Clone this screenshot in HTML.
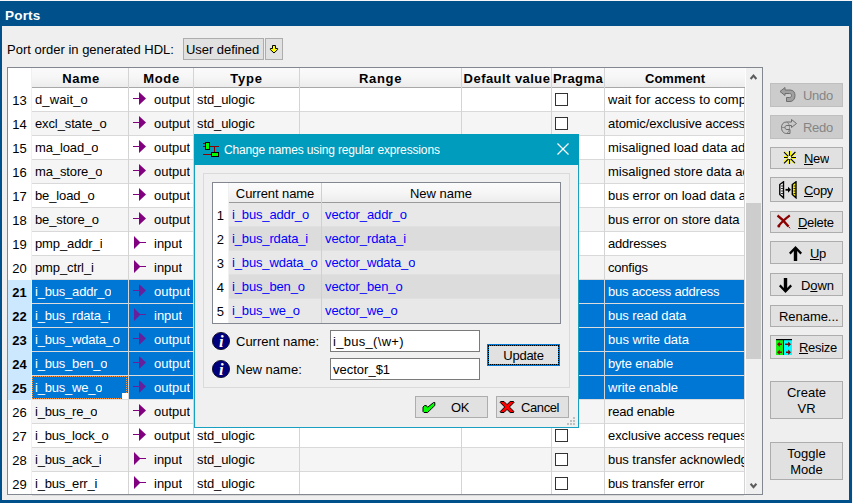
<!DOCTYPE html><html><head><meta charset="utf-8"><title>Ports</title><style>
*{box-sizing:border-box;margin:0;padding:0}
html,body{width:853px;height:503px;overflow:hidden}
body{background:#00518b;font-family:"Liberation Sans",sans-serif;font-size:13px;color:#000;position:relative}
.a{position:absolute}
.t{position:absolute;white-space:nowrap;line-height:24px;height:24px;overflow:hidden}
.btn{position:absolute;background:#e1e1e1;border:1px solid #adadad}
.btn.dis{background:#cccccc;border-color:#bfbfbf;color:#838383}
.btn .t{line-height:normal;height:auto;overflow:visible}
u{text-decoration:underline;text-underline-offset:1px}
.hl{position:absolute;height:1px;background:#d9d9d9}
.vl{position:absolute;width:1px;background:#d4d4d4}
.alt{position:absolute;background:#f5f5f5}
.sel{position:absolute;background:#0077d5}
.cb{position:absolute;width:13px;height:13px;border:1px solid #333;background:#fff}
.hd{position:absolute;background:linear-gradient(#fbfbfb,#f6f6f6 50%,#ececec);}
.hb{font-weight:bold;text-align:center}
</style></head><body>
<div class="a" style="left:0;top:0;width:853px;height:1px;background:#f4f6f8"></div>
<div class="a" style="left:852px;top:0;width:1px;height:503px;background:#f4f6f8"></div>
<div class="t" style="left:5px;top:4px;font-weight:bold;color:#fff;font-size:13.5px;letter-spacing:0.2px">Ports</div>
<div class="a" style="left:2px;top:26px;width:847px;height:474px;background:#efefef"></div>
<div class="t" style="left:7px;top:38px">Port order in generated HDL:</div>
<div class="btn" style="left:183px;top:38px;width:81px;height:22px"></div>
<div class="t" style="left:186px;top:38px;letter-spacing:-0.05px">User defined</div>
<div class="btn" style="left:265px;top:38px;width:18px;height:22px"></div>
<svg class="a" style="left:268px;top:43px" width="12" height="12" viewBox="268 43 12 12"><path d="M272.5 45.5H275.5V48.5H277.6V49.6L274 53L270.4 49.6V48.5H272.5Z" fill="#ffff00" stroke="#000" stroke-width="1" stroke-linejoin="miter"/></svg>
<div class="a" style="left:7px;top:67px;width:756px;height:428px;background:#fff;border:1px solid #828790"></div>
<div class="hd" style="left:32px;top:68px;width:713px;height:19px"></div>
<div class="a" style="left:32px;top:87px;width:713px;height:1px;background:#a8a8a8"></div>
<div class="t hb" style="left:32px;top:67px;width:96px;letter-spacing:0.5px;padding-left:2px">Name</div>
<div class="t hb" style="left:129px;top:67px;width:64px;letter-spacing:0.7px;padding-left:1px">Mode</div>
<div class="t hb" style="left:194px;top:67px;width:105px;letter-spacing:0.8px">Type</div>
<div class="t hb" style="left:300px;top:67px;width:161px;letter-spacing:0.7px">Range</div>
<div class="t hb" style="left:462px;top:67px;width:89px;letter-spacing:0.45px;padding-left:1px">Default value</div>
<div class="t hb" style="left:552px;top:67px;width:52px;letter-spacing:0.4px">Pragma</div>
<div class="t hb" style="left:605px;top:67px;width:140px;letter-spacing:0px">Comment</div>
<div class="hl" style="left:32px;top:111px;width:712px"></div>
<div class="t" style="left:8px;top:89px;width:23px;text-align:center;">13</div>
<div class="t" style="left:35px;top:88px;color:#000;letter-spacing:0.1px">d_wait_o</div>
<svg class="a" style="left:133px;top:92px" width="14" height="14" viewBox="0 0 14 14"><path d="M0 6h7v1h-7z M6 0l7 6.5l-7 6.5z" fill="#800080"/></svg>
<div class="t" style="left:154px;top:88px;color:#000">output</div>
<div class="t" style="left:197px;top:88px;color:#000;width:101px;letter-spacing:-0.1px">std_ulogic</div>
<div class="cb" style="left:555px;top:93px"></div>
<div class="t" style="left:608px;top:88px;color:#000;width:136px;letter-spacing:0.1px">wait for access to complete</div>
<div class="alt" style="left:32px;top:112px;width:712px;height:23px"></div>
<div class="hl" style="left:32px;top:135px;width:712px"></div>
<div class="t" style="left:8px;top:113px;width:23px;text-align:center;">14</div>
<div class="t" style="left:35px;top:112px;color:#000;letter-spacing:-0.12px">excl_state_o</div>
<svg class="a" style="left:133px;top:116px" width="14" height="14" viewBox="0 0 14 14"><path d="M0 6h7v1h-7z M6 0l7 6.5l-7 6.5z" fill="#800080"/></svg>
<div class="t" style="left:154px;top:112px;color:#000">output</div>
<div class="t" style="left:197px;top:112px;color:#000;width:101px;letter-spacing:-0.1px">std_ulogic</div>
<div class="cb" style="left:555px;top:117px"></div>
<div class="t" style="left:608px;top:112px;color:#000;width:136px;letter-spacing:-0.1px">atomic/exclusive access</div>
<div class="hl" style="left:32px;top:159px;width:712px"></div>
<div class="t" style="left:8px;top:137px;width:23px;text-align:center;">15</div>
<div class="t" style="left:35px;top:136px;color:#000;letter-spacing:-0.12px">ma_load_o</div>
<svg class="a" style="left:133px;top:140px" width="14" height="14" viewBox="0 0 14 14"><path d="M0 6h7v1h-7z M6 0l7 6.5l-7 6.5z" fill="#800080"/></svg>
<div class="t" style="left:154px;top:136px;color:#000">output</div>
<div class="t" style="left:197px;top:136px;color:#000;width:101px;letter-spacing:-0.1px">std_ulogic</div>
<div class="cb" style="left:555px;top:141px"></div>
<div class="t" style="left:608px;top:136px;color:#000;width:136px;letter-spacing:0px">misaligned load data address</div>
<div class="alt" style="left:32px;top:160px;width:712px;height:23px"></div>
<div class="hl" style="left:32px;top:183px;width:712px"></div>
<div class="t" style="left:8px;top:161px;width:23px;text-align:center;">16</div>
<div class="t" style="left:35px;top:160px;color:#000;letter-spacing:-0.12px">ma_store_o</div>
<svg class="a" style="left:133px;top:164px" width="14" height="14" viewBox="0 0 14 14"><path d="M0 6h7v1h-7z M6 0l7 6.5l-7 6.5z" fill="#800080"/></svg>
<div class="t" style="left:154px;top:160px;color:#000">output</div>
<div class="t" style="left:197px;top:160px;color:#000;width:101px;letter-spacing:-0.1px">std_ulogic</div>
<div class="cb" style="left:555px;top:165px"></div>
<div class="t" style="left:608px;top:160px;color:#000;width:136px;letter-spacing:0px">misaligned store data address</div>
<div class="hl" style="left:32px;top:207px;width:712px"></div>
<div class="t" style="left:8px;top:185px;width:23px;text-align:center;">17</div>
<div class="t" style="left:35px;top:184px;color:#000;letter-spacing:-0.12px">be_load_o</div>
<svg class="a" style="left:133px;top:188px" width="14" height="14" viewBox="0 0 14 14"><path d="M0 6h7v1h-7z M6 0l7 6.5l-7 6.5z" fill="#800080"/></svg>
<div class="t" style="left:154px;top:184px;color:#000">output</div>
<div class="t" style="left:197px;top:184px;color:#000;width:101px;letter-spacing:-0.1px">std_ulogic</div>
<div class="cb" style="left:555px;top:189px"></div>
<div class="t" style="left:608px;top:184px;color:#000;width:136px;letter-spacing:0px">bus error on load data access</div>
<div class="alt" style="left:32px;top:208px;width:712px;height:23px"></div>
<div class="hl" style="left:32px;top:231px;width:712px"></div>
<div class="t" style="left:8px;top:209px;width:23px;text-align:center;">18</div>
<div class="t" style="left:35px;top:208px;color:#000;letter-spacing:-0.12px">be_store_o</div>
<svg class="a" style="left:133px;top:212px" width="14" height="14" viewBox="0 0 14 14"><path d="M0 6h7v1h-7z M6 0l7 6.5l-7 6.5z" fill="#800080"/></svg>
<div class="t" style="left:154px;top:208px;color:#000">output</div>
<div class="t" style="left:197px;top:208px;color:#000;width:101px;letter-spacing:-0.1px">std_ulogic</div>
<div class="cb" style="left:555px;top:213px"></div>
<div class="t" style="left:608px;top:208px;color:#000;width:136px;letter-spacing:0px">bus error on store data</div>
<div class="hl" style="left:32px;top:255px;width:712px"></div>
<div class="t" style="left:8px;top:233px;width:23px;text-align:center;">19</div>
<div class="t" style="left:35px;top:232px;color:#000;letter-spacing:-0.12px">pmp_addr_i</div>
<svg class="a" style="left:133px;top:236px" width="14" height="14" viewBox="0 0 14 14"><path d="M6 6h7v1h-7z M1 0l6.5 6.5l-6.5 6.5z" fill="#800080"/></svg>
<div class="t" style="left:154px;top:232px;color:#000">input</div>
<div class="t" style="left:197px;top:232px;color:#000;width:101px;letter-spacing:-0.1px">pmp_addr_if_t</div>
<div class="cb" style="left:555px;top:237px"></div>
<div class="t" style="left:608px;top:232px;color:#000;width:136px;letter-spacing:-0.2px">addresses</div>
<div class="alt" style="left:32px;top:256px;width:712px;height:23px"></div>
<div class="hl" style="left:32px;top:279px;width:712px"></div>
<div class="t" style="left:8px;top:257px;width:23px;text-align:center;">20</div>
<div class="t" style="left:35px;top:256px;color:#000;letter-spacing:-0.12px">pmp_ctrl_i</div>
<svg class="a" style="left:133px;top:260px" width="14" height="14" viewBox="0 0 14 14"><path d="M6 6h7v1h-7z M1 0l6.5 6.5l-6.5 6.5z" fill="#800080"/></svg>
<div class="t" style="left:154px;top:256px;color:#000">input</div>
<div class="t" style="left:197px;top:256px;color:#000;width:101px;letter-spacing:-0.1px">pmp_ctrl_if_t</div>
<div class="cb" style="left:555px;top:261px"></div>
<div class="t" style="left:608px;top:256px;color:#000;width:136px;letter-spacing:-0.2px">configs</div>
<div class="a" style="left:8px;top:280px;width:23px;height:24px;background:#cce8ff"></div>
<div class="sel" style="left:32px;top:280px;width:712px;height:23px"></div>
<div class="hl" style="left:32px;top:303px;width:712px;background:#dcdcdc"></div>
<div class="t" style="left:8px;top:281px;width:23px;text-align:center;font-weight:bold;">21</div>
<div class="t" style="left:35px;top:280px;color:#fff;letter-spacing:-0.2px">i_bus_addr_o</div>
<svg class="a" style="left:133px;top:284px" width="14" height="14" viewBox="0 0 14 14"><path d="M0 6h7v1h-7z M6 0l7 6.5l-7 6.5z" fill="#66209c"/></svg>
<div class="t" style="left:154px;top:280px;color:#fff">output</div>
<div class="t" style="left:197px;top:280px;color:#fff;width:101px;letter-spacing:-0.1px">std_ulogic_vector</div>
<div class="t" style="left:608px;top:280px;color:#fff;width:136px;letter-spacing:-0.2px">bus access address</div>
<div class="a" style="left:8px;top:304px;width:23px;height:24px;background:#cce8ff"></div>
<div class="sel" style="left:32px;top:304px;width:712px;height:23px"></div>
<div class="hl" style="left:32px;top:327px;width:712px;background:#dcdcdc"></div>
<div class="t" style="left:8px;top:305px;width:23px;text-align:center;font-weight:bold;">22</div>
<div class="t" style="left:35px;top:304px;color:#fff;letter-spacing:-0.2px">i_bus_rdata_i</div>
<svg class="a" style="left:133px;top:308px" width="14" height="14" viewBox="0 0 14 14"><path d="M6 6h7v1h-7z M1 0l6.5 6.5l-6.5 6.5z" fill="#66209c"/></svg>
<div class="t" style="left:154px;top:304px;color:#fff">input</div>
<div class="t" style="left:197px;top:304px;color:#fff;width:101px;letter-spacing:-0.1px">std_ulogic_vector</div>
<div class="t" style="left:608px;top:304px;color:#fff;width:136px;letter-spacing:-0.1px">bus read data</div>
<div class="a" style="left:8px;top:328px;width:23px;height:24px;background:#cce8ff"></div>
<div class="sel" style="left:32px;top:328px;width:712px;height:23px"></div>
<div class="hl" style="left:32px;top:351px;width:712px;background:#dcdcdc"></div>
<div class="t" style="left:8px;top:329px;width:23px;text-align:center;font-weight:bold;">23</div>
<div class="t" style="left:35px;top:328px;color:#fff;letter-spacing:-0.2px">i_bus_wdata_o</div>
<svg class="a" style="left:133px;top:332px" width="14" height="14" viewBox="0 0 14 14"><path d="M0 6h7v1h-7z M6 0l7 6.5l-7 6.5z" fill="#66209c"/></svg>
<div class="t" style="left:154px;top:328px;color:#fff">output</div>
<div class="t" style="left:197px;top:328px;color:#fff;width:101px;letter-spacing:-0.1px">std_ulogic_vector</div>
<div class="t" style="left:608px;top:328px;color:#fff;width:136px;letter-spacing:0px">bus write data</div>
<div class="a" style="left:8px;top:352px;width:23px;height:24px;background:#cce8ff"></div>
<div class="sel" style="left:32px;top:352px;width:712px;height:23px"></div>
<div class="hl" style="left:32px;top:375px;width:712px;background:#dcdcdc"></div>
<div class="t" style="left:8px;top:353px;width:23px;text-align:center;font-weight:bold;">24</div>
<div class="t" style="left:35px;top:352px;color:#fff;letter-spacing:-0.2px">i_bus_ben_o</div>
<svg class="a" style="left:133px;top:356px" width="14" height="14" viewBox="0 0 14 14"><path d="M0 6h7v1h-7z M6 0l7 6.5l-7 6.5z" fill="#66209c"/></svg>
<div class="t" style="left:154px;top:352px;color:#fff">output</div>
<div class="t" style="left:197px;top:352px;color:#fff;width:101px;letter-spacing:-0.1px">std_ulogic_vector</div>
<div class="t" style="left:608px;top:352px;color:#fff;width:136px;letter-spacing:-0.2px">byte enable</div>
<div class="a" style="left:8px;top:376px;width:23px;height:24px;background:#cce8ff"></div>
<div class="sel" style="left:32px;top:376px;width:712px;height:23px"></div>
<div class="hl" style="left:32px;top:399px;width:712px;background:#dcdcdc"></div>
<div class="t" style="left:8px;top:377px;width:23px;text-align:center;font-weight:bold;">25</div>
<div class="t" style="left:35px;top:376px;color:#fff;letter-spacing:-0.2px">i_bus_we_o</div>
<svg class="a" style="left:133px;top:380px" width="14" height="14" viewBox="0 0 14 14"><path d="M0 6h7v1h-7z M6 0l7 6.5l-7 6.5z" fill="#66209c"/></svg>
<div class="t" style="left:154px;top:376px;color:#fff">output</div>
<div class="t" style="left:197px;top:376px;color:#fff;width:101px;letter-spacing:-0.1px">std_ulogic</div>
<div class="t" style="left:608px;top:376px;color:#fff;width:136px;letter-spacing:0px">write enable</div>
<div class="alt" style="left:32px;top:400px;width:712px;height:23px"></div>
<div class="hl" style="left:32px;top:423px;width:712px"></div>
<div class="t" style="left:8px;top:401px;width:23px;text-align:center;">26</div>
<div class="t" style="left:35px;top:400px;color:#000;letter-spacing:-0.2px">i_bus_re_o</div>
<svg class="a" style="left:133px;top:404px" width="14" height="14" viewBox="0 0 14 14"><path d="M0 6h7v1h-7z M6 0l7 6.5l-7 6.5z" fill="#800080"/></svg>
<div class="t" style="left:154px;top:400px;color:#000">output</div>
<div class="t" style="left:197px;top:400px;color:#000;width:101px;letter-spacing:-0.1px">std_ulogic</div>
<div class="cb" style="left:555px;top:405px"></div>
<div class="t" style="left:608px;top:400px;color:#000;width:136px;letter-spacing:-0.2px">read enable</div>
<div class="hl" style="left:32px;top:447px;width:712px"></div>
<div class="t" style="left:8px;top:425px;width:23px;text-align:center;">27</div>
<div class="t" style="left:35px;top:424px;color:#000;letter-spacing:-0.2px">i_bus_lock_o</div>
<svg class="a" style="left:133px;top:428px" width="14" height="14" viewBox="0 0 14 14"><path d="M0 6h7v1h-7z M6 0l7 6.5l-7 6.5z" fill="#800080"/></svg>
<div class="t" style="left:154px;top:424px;color:#000">output</div>
<div class="t" style="left:197px;top:424px;color:#000;width:101px;letter-spacing:-0.1px">std_ulogic</div>
<div class="cb" style="left:555px;top:429px"></div>
<div class="t" style="left:608px;top:424px;color:#000;width:136px;letter-spacing:-0.1px">exclusive access request</div>
<div class="alt" style="left:32px;top:448px;width:712px;height:23px"></div>
<div class="hl" style="left:32px;top:471px;width:712px"></div>
<div class="t" style="left:8px;top:449px;width:23px;text-align:center;">28</div>
<div class="t" style="left:35px;top:448px;color:#000;letter-spacing:-0.2px">i_bus_ack_i</div>
<svg class="a" style="left:133px;top:452px" width="14" height="14" viewBox="0 0 14 14"><path d="M6 6h7v1h-7z M1 0l6.5 6.5l-6.5 6.5z" fill="#800080"/></svg>
<div class="t" style="left:154px;top:448px;color:#000">input</div>
<div class="t" style="left:197px;top:448px;color:#000;width:101px;letter-spacing:-0.1px">std_ulogic</div>
<div class="cb" style="left:555px;top:453px"></div>
<div class="t" style="left:608px;top:448px;color:#000;width:136px;letter-spacing:-0.05px">bus transfer acknowledge</div>
<div class="hl" style="left:32px;top:495px;width:712px"></div>
<div class="t" style="left:8px;top:473px;width:23px;text-align:center;">29</div>
<div class="t" style="left:35px;top:472px;color:#000;letter-spacing:-0.2px">i_bus_err_i</div>
<svg class="a" style="left:133px;top:476px" width="14" height="14" viewBox="0 0 14 14"><path d="M6 6h7v1h-7z M1 0l6.5 6.5l-6.5 6.5z" fill="#800080"/></svg>
<div class="t" style="left:154px;top:472px;color:#000">input</div>
<div class="t" style="left:197px;top:472px;color:#000;width:101px;letter-spacing:-0.1px">std_ulogic</div>
<div class="cb" style="left:555px;top:477px"></div>
<div class="t" style="left:608px;top:472px;color:#000;width:136px;letter-spacing:-0.2px">bus transfer error</div>
<div class="vl" style="left:31px;top:68px;height:426px;background:#f0f0f0"></div>
<div class="vl" style="left:128px;top:68px;height:426px"></div>
<div class="vl" style="left:193px;top:68px;height:426px"></div>
<div class="vl" style="left:299px;top:68px;height:426px"></div>
<div class="vl" style="left:461px;top:68px;height:426px"></div>
<div class="vl" style="left:551px;top:68px;height:426px"></div>
<div class="vl" style="left:604px;top:68px;height:426px"></div>
<div class="a" style="left:32px;top:376px;width:95px;height:23px;border:1px dotted #ff9436"></div>
<div class="a" style="left:122px;top:393px;width:6px;height:6px;background:#fff"></div>
<div class="a" style="left:746px;top:68px;width:16px;height:426px;background:#f0f0f0"></div>
<div class="a" style="left:744px;top:88px;width:1px;height:406px;background:#d4d4d4"></div>
<div class="a" style="left:745px;top:68px;width:1px;height:426px;background:#fdfdfd"></div>
<div class="a" style="left:746px;top:203px;width:15px;height:156px;background:#cdcdcd"></div>
<svg class="a" style="left:748px;top:72px" width="12" height="10" viewBox="748 72 12 10"><path d="M750.6 79L753.5 75.6L756.4 79" fill="none" stroke="#5c5c5c" stroke-width="2.1"/></svg>
<svg class="a" style="left:748px;top:481px" width="12" height="10" viewBox="748 481 12 10"><path d="M750.6 483.8L753.5 487.2L756.4 483.8" fill="none" stroke="#5c5c5c" stroke-width="2.1"/></svg>
<div class="btn dis" style="left:770px;top:83px;width:73px;height:24px"></div>
<div class="btn dis" style="left:770px;top:115px;width:73px;height:24px"></div>
<div class="btn" style="left:770px;top:147px;width:73px;height:22px"></div>
<div class="btn" style="left:770px;top:177px;width:73px;height:25px"></div>
<div class="btn" style="left:770px;top:211px;width:73px;height:22px"></div>
<div class="btn" style="left:770px;top:241px;width:73px;height:23px"></div>
<div class="btn" style="left:770px;top:273px;width:73px;height:23px"></div>
<div class="btn" style="left:770px;top:305px;width:73px;height:22px"></div>
<div class="btn" style="left:770px;top:335px;width:73px;height:24px"></div>
<div class="btn" style="left:770px;top:381px;width:73px;height:38px"></div>
<div class="btn" style="left:770px;top:442px;width:73px;height:38px"></div>
<div class="t" style="left:803px;top:84px;color:#858585;letter-spacing:-0.3px">Undo</div>
<div class="t" style="left:803px;top:116px;color:#858585;letter-spacing:-0.3px">Redo</div>
<div class="t" style="left:804px;top:147px;color:#000;letter-spacing:-0.3px"><u>N</u>ew</div>
<div class="t" style="left:804px;top:179px;color:#000;letter-spacing:-0.35px"><u>C</u>opy</div>
<div class="t" style="left:798px;top:211px;color:#000;letter-spacing:-0.3px"><u>D</u>elete</div>
<div class="t" style="left:810px;top:242px;color:#000;letter-spacing:-0.3px"><u>U</u>p</div>
<div class="t" style="left:801px;top:274px;color:#000;letter-spacing:-0.1px">D<u>o</u>wn</div>
<div class="t" style="left:779px;top:305px;color:#000;letter-spacing:-0.05px">Rename...</div>
<div class="t" style="left:799px;top:336px;color:#000;letter-spacing:-0.3px"><u>R</u>esize</div>
<div class="t" style="left:770px;top:385px;width:73px;text-align:center;line-height:16px;height:34px;white-space:normal">Create<br>VR</div>
<div class="t" style="left:770px;top:446px;width:73px;text-align:center;line-height:16px;height:34px;white-space:normal">Toggle<br>Mode</div>
<svg class="a" style="left:779px;top:86px" width="18" height="17" viewBox="0 0 18 17"><path d="M1 5.5L6 1.5V4H11C14.5 4 16 6.5 16 9.5C16 13 14 15.5 11 15.5H7.5V11.5H10.5C12 11.5 12.5 10.5 12.5 9.5C12.5 8.3 12 7.5 10.5 7.5H6V9.5Z" fill="#a0a0a0" stroke="#6e6e6e" stroke-width="1" stroke-linejoin="round"/></svg>
<svg class="a" style="left:780px;top:118px" width="18" height="17" viewBox="0 0 18 17"><g transform="translate(17.5,0) scale(-1,1)"><path d="M1 5.5L6 1.5V4H11C14.5 4 16 6.5 16 9.5C16 13 14 15.5 11 15.5H7.5V11.5H10.5C12 11.5 12.5 10.5 12.5 9.5C12.5 8.3 12 7.5 10.5 7.5H6V9.5Z" fill="#c8c8c8" stroke="#6e6e6e" stroke-width="1" stroke-linejoin="round"/><path d="M11 4C7 5 7 14 11 15.5M12.5 9.5H16" fill="none" stroke="#7a7a7a" stroke-width="0.8"/></g></svg>
<svg class="a" style="left:782px;top:149px" width="16" height="17" viewBox="782 149 16 17"><g stroke="#ffff00" stroke-width="1.1" fill="none"><path d="M790.5 151V155.8M788.5 159.2V164M784 156.5H788M791 158.5H796M784.8 151.4L788.8 155.4M796.1 152.7L791.7 157.1M783.4 162.2L787.4 158.2M790.3 159.8L794.4 163.9"/></g><g stroke="#000" stroke-width="1.1" fill="none"><path d="M789.5 151V164M784 157.5H796M784 152.2L795 163.2M795.4 152L784 163.4"/></g><circle cx="789.5" cy="157.5" r="1.7" fill="#fff"/><circle cx="789.5" cy="157.5" r="0.8" fill="#ffff00"/></svg>
<svg class="a" style="left:779px;top:181px" width="19" height="18" viewBox="0 0 19 18"><path d="M4.5 0.8L0.8 3.5V13.5L4.5 16.8Z" fill="#fff" stroke="#000" stroke-width="1.4"/><path d="M2 5h2M2 7.5h2M2 10h2M2 12.5h2" stroke="#000" stroke-width="0.8"/><path d="M17 0.8L13.3 3.5V13.5L17 16.8Z" fill="#ffee00" stroke="#000" stroke-width="1.4"/><path d="M14.5 5h2M14.5 7.5h2M14.5 10h2M14.5 12.5h2" stroke="#000" stroke-width="0.8"/><path d="M6.5 8.8H9.5" stroke="#000" stroke-width="1.8"/><path d="M9 5.8L12 8.8L9 11.8Z" fill="#000"/></svg>
<svg class="a" style="left:776px;top:214px" width="16" height="15" viewBox="0 0 16 15"><path d="M1.5 1.5C5 4 9 8 12.5 12.5" stroke="#8b0000" stroke-width="2.4" fill="none"/><path d="M12.5 12.5L14 14.3" stroke="#8b0000" stroke-width="1" fill="none"/><path d="M13.8 1.3C9 5 5 8.5 2.6 12" stroke="#8b0000" stroke-width="2.2" fill="none"/><circle cx="2.8" cy="12" r="1.5" fill="#8b0000"/></svg>
<svg class="a" style="left:788px;top:245px" width="15" height="17" viewBox="0 0 15 17"><path d="M7.5 1L14 7.8L12.4 9.4L9.2 6V16H5.8V6L2.6 9.4L1 7.8Z" fill="#000"/></svg>
<svg class="a" style="left:778px;top:277px" width="15" height="17" viewBox="0 0 15 17"><path d="M7.5 16L14 9.2L12.4 7.6L9.2 11V1H5.8V11L2.6 7.6L1 9.2Z" fill="#000"/></svg>
<svg class="a" style="left:776px;top:339px" width="16" height="16" viewBox="0 0 16 16"><rect x="0" y="1" width="7" height="15" fill="#14f014"/><rect x="8" y="1" width="8" height="15" fill="#00ffff"/><rect x="0" y="0" width="16" height="1.2" fill="#000"/><rect x="7" y="0" width="1" height="16" fill="#000"/><g fill="#8b0000"><path d="M1 5.3L3.8 2.6V4.6H6V6H3.8V8Z"/><path d="M15 5.3L12.2 2.6V4.6H9V6H12.2V8Z"/><path d="M1 13.3L3.8 10.6V12.6H6V14H3.8V16Z"/><path d="M15 13.3L12.2 10.6V12.6H10V14H12.2V16Z"/></g></svg>
<div class="a" style="left:194px;top:134px;width:385px;height:294px;background:#f0f0f0;border:1px solid #18a0c0"></div>
<div class="a" style="left:194px;top:134px;width:385px;height:31px;background:#009cbd"></div>
<div class="t" style="left:224px;top:138px;color:#fff;font-size:12px;letter-spacing:-0.15px">Change names using regular expressions</div>
<svg class="a" style="left:557px;top:143px" width="12" height="12" viewBox="0 0 12 12"><path d="M0.5 0.5l11 11M11.5 0.5l-11 11" stroke="#fff" stroke-width="1.2" fill="none"/></svg>
<svg class="a" style="left:203px;top:141px" width="17" height="17" viewBox="0 0 17 17"><g stroke="#8b0000" stroke-width="1" fill="none"><path d="M0 2.5H2.5M0 5.5H2.5M7 5.5H16M11.5 5.5V11M0 13.5H8"/></g><rect x="2.5" y="1.5" width="4" height="7" fill="#00ff00" stroke="#000" stroke-width="1"/><rect x="8.5" y="11.5" width="7" height="4" fill="#00ff00" stroke="#000" stroke-width="1"/></svg>
<div class="a" style="left:573px;top:417px;width:2px;height:2px;background:#bfbfbf"></div>
<div class="a" style="left:570px;top:420px;width:2px;height:2px;background:#bfbfbf"></div>
<div class="a" style="left:573px;top:420px;width:2px;height:2px;background:#bfbfbf"></div>
<div class="a" style="left:567px;top:423px;width:2px;height:2px;background:#bfbfbf"></div>
<div class="a" style="left:570px;top:423px;width:2px;height:2px;background:#bfbfbf"></div>
<div class="a" style="left:573px;top:423px;width:2px;height:2px;background:#bfbfbf"></div>
<div class="a" style="left:203px;top:173px;width:367px;height:215px;border:1px solid #dadada"></div>
<div class="a" style="left:212px;top:182px;width:349px;height:142px;background:#fff;border:1px solid #828790"></div>
<div class="hd" style="left:229px;top:183px;width:331px;height:19px"></div>
<div class="a" style="left:229px;top:202px;width:331px;height:1px;background:#9a9a9a"></div>
<div class="t" style="left:229px;top:182px;width:92px;text-align:center;letter-spacing:-0.1px">Current name</div>
<div class="t" style="left:322px;top:182px;width:238px;text-align:center">New name</div>
<div class="a" style="left:229px;top:203px;width:331px;height:23px;background:#e8e8e8"></div>
<div class="hl" style="left:229px;top:226px;width:331px;background:#e0e0e0"></div>
<div class="t" style="left:214px;top:204px;width:10px;text-align:right">1</div>
<div class="t" style="left:232px;top:203px;color:#0000ff;letter-spacing:-0.15px">i_bus_addr_o</div>
<div class="t" style="left:325px;top:203px;color:#0000ff;letter-spacing:-0.1px">vector_addr_o</div>
<div class="a" style="left:229px;top:227px;width:331px;height:23px;background:#dcdcdc"></div>
<div class="hl" style="left:229px;top:250px;width:331px;background:#e0e0e0"></div>
<div class="t" style="left:214px;top:228px;width:10px;text-align:right">2</div>
<div class="t" style="left:232px;top:227px;color:#0000ff;letter-spacing:-0.15px">i_bus_rdata_i</div>
<div class="t" style="left:325px;top:227px;color:#0000ff;letter-spacing:-0.1px">vector_rdata_i</div>
<div class="a" style="left:229px;top:251px;width:331px;height:23px;background:#e8e8e8"></div>
<div class="hl" style="left:229px;top:274px;width:331px;background:#e0e0e0"></div>
<div class="t" style="left:214px;top:252px;width:10px;text-align:right">3</div>
<div class="t" style="left:232px;top:251px;color:#0000ff;letter-spacing:-0.15px">i_bus_wdata_o</div>
<div class="t" style="left:325px;top:251px;color:#0000ff;letter-spacing:-0.1px">vector_wdata_o</div>
<div class="a" style="left:229px;top:275px;width:331px;height:23px;background:#dcdcdc"></div>
<div class="hl" style="left:229px;top:298px;width:331px;background:#e0e0e0"></div>
<div class="t" style="left:214px;top:276px;width:10px;text-align:right">4</div>
<div class="t" style="left:232px;top:275px;color:#0000ff;letter-spacing:-0.15px">i_bus_ben_o</div>
<div class="t" style="left:325px;top:275px;color:#0000ff;letter-spacing:-0.1px">vector_ben_o</div>
<div class="a" style="left:229px;top:299px;width:331px;height:24px;background:#e8e8e8"></div>
<div class="t" style="left:214px;top:300px;width:10px;text-align:right">5</div>
<div class="t" style="left:232px;top:299px;color:#0000ff;letter-spacing:-0.15px">i_bus_we_o</div>
<div class="t" style="left:325px;top:299px;color:#0000ff;letter-spacing:-0.1px">vector_we_o</div>
<div class="vl" style="left:321px;top:183px;height:140px;background:#d0d0d0"></div>
<div class="vl" style="left:228px;top:183px;height:140px;background:#f0f0f0"></div>
<svg class="a" style="left:212px;top:332px" width="18" height="18" viewBox="0 0 18 18"><circle cx="9" cy="9" r="8.6" fill="#00007c" stroke="#000018" stroke-width="0.8"/><text x="9.2" y="14.6" font-family="Liberation Serif" font-style="italic" font-weight="bold" font-size="16.5" fill="#fff" text-anchor="middle">i</text></svg>
<svg class="a" style="left:212px;top:360px" width="18" height="18" viewBox="0 0 18 18"><circle cx="9" cy="9" r="8.6" fill="#00007c" stroke="#000018" stroke-width="0.8"/><text x="9.2" y="14.6" font-family="Liberation Serif" font-style="italic" font-weight="bold" font-size="16.5" fill="#fff" text-anchor="middle">i</text></svg>
<div class="t" style="left:236px;top:330px">Current name:</div>
<div class="t" style="left:236px;top:358px">New name:</div>
<div class="a" style="left:330px;top:330px;width:150px;height:22px;background:#fff;border:1px solid #7a7a7a"></div>
<div class="a" style="left:330px;top:358px;width:150px;height:22px;background:#fff;border:1px solid #7a7a7a"></div>
<div class="t" style="left:333px;top:330px;letter-spacing:0.3px">i_bus_(\w+)</div>
<div class="t" style="left:333px;top:358px">vector_$1</div>
<div class="btn" style="left:487px;top:344px;width:73px;height:22px;border:2px solid #0078d7"></div>
<div class="a" style="left:488px;top:345px;width:71px;height:20px;border:1px dotted #000"></div>
<div class="t" style="left:487px;top:344px;width:73px;text-align:center;letter-spacing:-0.25px">Update</div>
<div class="btn" style="left:415px;top:396px;width:73px;height:22px"></div>
<div class="btn" style="left:496px;top:396px;width:73px;height:22px"></div>
<div class="t" style="left:451px;top:396px;letter-spacing:-0.3px">OK</div>
<div class="t" style="left:521px;top:396px;letter-spacing:-0.4px">Cancel</div>
<svg class="a" style="left:420px;top:399px" width="18" height="16" viewBox="420 399 18 16"><path d="M433.6 402.5L434.8 402.5L434.8 405.5L427.6 412.5L424 412.5L423 411.5L423 407L424.5 405.6L426.4 405.6L427.5 407.4Z" fill="#00ff00" stroke="#000" stroke-width="1" stroke-linejoin="miter"/></svg>
<svg class="a" style="left:498px;top:399px" width="18" height="16" viewBox="498 399 18 16"><path d="M500.7 401.5L504 401.5L507 404.6L510.2 401.5L513.5 401.5L514 402.4L509.4 407L514 411.6L513.5 412.5L510.2 412.5L507 409.4L504 412.5L500.7 412.5L500.2 411.6L504.7 407L500.2 402.4Z" fill="#ff0000" stroke="#000" stroke-width="1" stroke-linejoin="miter"/></svg>
</body></html>
